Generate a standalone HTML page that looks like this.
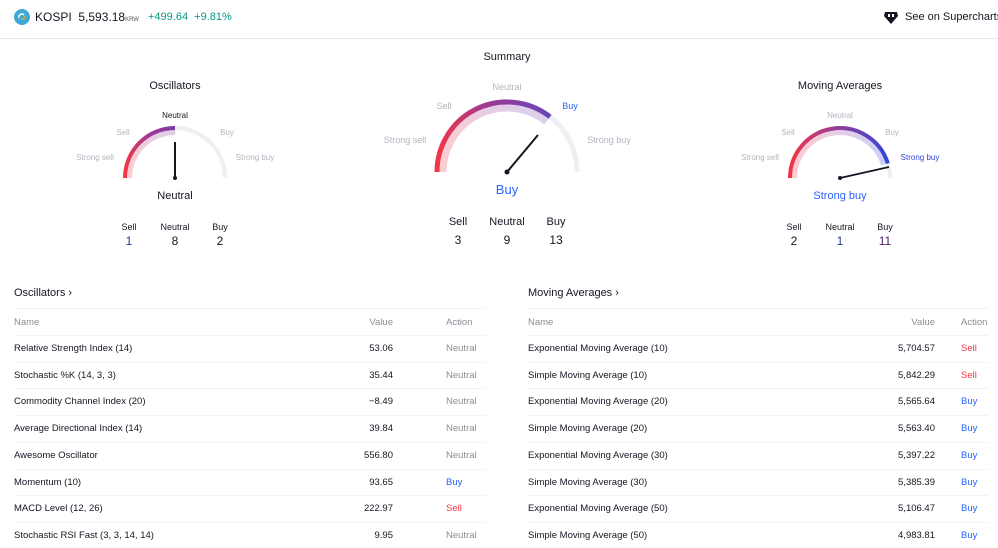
<!DOCTYPE html>
<html><head><meta charset="utf-8"><style>
*{margin:0;padding:0;box-sizing:border-box}
body{width:998px;height:548px;overflow:hidden;background:#fff;font-family:"Liberation Sans",sans-serif;color:#131722;position:relative}
.a{position:absolute;white-space:nowrap}
.c{transform:translateX(-50%);text-align:center}
.g{color:#b2b5be}
.t{font-size:9.5px}
.sep{position:absolute;height:1px;background:#f0f3fa}
.blue{color:#2962ff}.red{color:#f23645}.grey{color:#8a8d96}
</style></head><body>
<div class="a" style="left:0;top:38px;width:998px;height:1px;background:#e6e8ec"></div>
<svg class="a" style="left:14px;top:9px" width="16" height="16" viewBox="0 0 16 16"><circle cx="8" cy="8" r="8" fill="#3fa9d6"/><path d="M5 9a3 3 0 0 1 5-3" stroke="#fff" stroke-width="1.4" fill="none"/><path d="M11 7a3 3 0 0 1-4 3" stroke="#f5a623" stroke-width="1.2" fill="none"/></svg>
<div class="a" style="left:35px;top:10px;font-size:12px">KOSPI&nbsp; 5,593.18<span style="font-size:6px;color:#50535e">KRW</span></div>
<div class="a" style="left:148px;top:11px;font-size:11px;color:#089981">+499.64&nbsp; +9.81%</div>
<svg class="a" style="left:883px;top:9px" width="16" height="16" viewBox="0 0 16 16"><path d="M2 3h12l1 4-7 8-7-8z" fill="#131722"/><rect x="5" y="5" width="2" height="3" fill="#fff"/><rect x="9" y="5" width="2" height="3" fill="#fff"/></svg>
<div class="a" style="left:905px;top:11px;font-size:11px">See on Supercharts</div>

<div class="a c" style="left:507px;top:51px;font-size:11px">Summary</div>
<div class="a c" style="left:175px;top:80px;font-size:11px">Oscillators</div>
<div class="a c" style="left:840px;top:80px;font-size:11px">Moving Averages</div>

<svg class="a" style="left:0;top:0" width="998" height="260">
<defs><linearGradient id="gr" x1="0" x2="1" y1="0" y2="0"><stop offset="0" stop-color="#f23645"/><stop offset=".5" stop-color="#9c3a96"/><stop offset="1" stop-color="#7b3ba0"/></linearGradient>
<linearGradient id="gr2" x1="0" x2="1"><stop offset="0" stop-color="#f23645"/><stop offset=".45" stop-color="#9c3a96"/><stop offset="1" stop-color="#6a45b8"/></linearGradient>
<linearGradient id="gr3" x1="0" x2="1"><stop offset="0" stop-color="#f23645"/><stop offset=".45" stop-color="#9c3a96"/><stop offset="1" stop-color="#3345d8"/></linearGradient></defs>
<path d="M175 128A50 50 0 0 1 225 178" stroke="#eeeff2" stroke-width="4" fill="none"/>
<path d="M129.5 178A45.5 45.5 0 0 1 175 132.5" stroke="url(#gr)" stroke-opacity=".25" stroke-width="5" fill="none"/>
<path d="M125 178A50 50 0 0 1 175 128" stroke="url(#gr)" stroke-width="4" fill="none"/>
<line x1="175" y1="178" x2="175" y2="142" stroke="#131722" stroke-width="2"/><circle cx="175" cy="178" r="2" fill="#131722"/>
<path d="M550.1 116.8A70 70 0 0 1 577 172" stroke="#eeeff2" stroke-width="5" fill="none"/>
<path d="M443 172A64 64 0 0 1 546.4 121.6" stroke="url(#gr2)" stroke-opacity=".25" stroke-width="7" fill="none"/>
<path d="M437 172A70 70 0 0 1 550.1 116.8" stroke="url(#gr2)" stroke-width="5" fill="none"/>
<line x1="507" y1="172" x2="538" y2="135" stroke="#131722" stroke-width="2"/><circle cx="507" cy="172" r="2.5" fill="#131722"/>
<path d="M887.8 163.4A50 50 0 0 1 890 178" stroke="#eeeff2" stroke-width="4" fill="none"/>
<path d="M794.5 178A45.5 45.5 0 0 1 883.5 164.7" stroke="url(#gr3)" stroke-opacity=".25" stroke-width="5" fill="none"/>
<path d="M790 178A50 50 0 0 1 887.8 163.4" stroke="url(#gr3)" stroke-width="4" fill="none"/>
<line x1="840" y1="178" x2="889" y2="167" stroke="#131722" stroke-width="1.8"/><circle cx="840" cy="178" r="2" fill="#131722"/>
</svg>

<div class="a c" style="left:175px;top:111px;font-size:8px">Neutral</div>
<div class="a c g" style="left:123px;top:128px;font-size:8px">Sell</div>
<div class="a c g" style="left:227px;top:128px;font-size:8px">Buy</div>
<div class="a c g" style="left:95px;top:153px;font-size:8px">Strong sell</div>
<div class="a c g" style="left:255px;top:153px;font-size:8px">Strong buy</div>
<div class="a c" style="left:175px;top:190px;font-size:11px">Neutral</div>
<div class="a c" style="left:129px;top:222px;font-size:9px">Sell</div>
<div class="a c" style="left:175px;top:222px;font-size:9px">Neutral</div>
<div class="a c" style="left:220px;top:222px;font-size:9px">Buy</div>
<div class="a c" style="left:129px;top:234px;font-size:12px;color:#1e3a8a">1</div>
<div class="a c" style="left:175px;top:234px;font-size:12px">8</div>
<div class="a c" style="left:220px;top:234px;font-size:12px">2</div>

<div class="a c g" style="left:507px;top:82px;font-size:9px">Neutral</div>
<div class="a c g" style="left:444px;top:101px;font-size:9px">Sell</div>
<div class="a c" style="left:570px;top:101px;font-size:9px;color:#2962ff">Buy</div>
<div class="a c g" style="left:405px;top:135px;font-size:9px">Strong sell</div>
<div class="a c g" style="left:609px;top:135px;font-size:9px">Strong buy</div>
<div class="a c" style="left:507px;top:182px;font-size:13px;color:#2962ff">Buy</div>
<div class="a c" style="left:458px;top:216px;font-size:11px">Sell</div>
<div class="a c" style="left:507px;top:216px;font-size:11px">Neutral</div>
<div class="a c" style="left:556px;top:216px;font-size:11px">Buy</div>
<div class="a c" style="left:458px;top:233px;font-size:12px">3</div>
<div class="a c" style="left:507px;top:233px;font-size:12px">9</div>
<div class="a c" style="left:556px;top:233px;font-size:12px">13</div>

<div class="a c g" style="left:840px;top:111px;font-size:8px">Neutral</div>
<div class="a c g" style="left:788px;top:128px;font-size:8px">Sell</div>
<div class="a c g" style="left:892px;top:128px;font-size:8px">Buy</div>
<div class="a c g" style="left:760px;top:153px;font-size:8px">Strong sell</div>
<div class="a c" style="left:920px;top:153px;font-size:8px;color:#3345d8">Strong buy</div>
<div class="a c" style="left:840px;top:190px;font-size:11px;color:#2962ff">Strong buy</div>
<div class="a c" style="left:794px;top:222px;font-size:9px">Sell</div>
<div class="a c" style="left:840px;top:222px;font-size:9px">Neutral</div>
<div class="a c" style="left:885px;top:222px;font-size:9px">Buy</div>
<div class="a c" style="left:794px;top:234px;font-size:12px">2</div>
<div class="a c" style="left:840px;top:234px;font-size:12px;color:#1e3a8a">1</div>
<div class="a c" style="left:885px;top:234px;font-size:12px;color:#4a1d6e">11</div>

<div class="a" style="left:14px;top:287px;font-size:11px">Oscillators ›</div>
<div class="a" style="left:528px;top:287px;font-size:11px">Moving Averages ›</div>
<div id="T"></div>
<script>
var L=[["Relative Strength Index (14)","53.06","Neutral"],["Stochastic %K (14, 3, 3)","35.44","Neutral"],["Commodity Channel Index (20)","−8.49","Neutral"],["Average Directional Index (14)","39.84","Neutral"],["Awesome Oscillator","556.80","Neutral"],["Momentum (10)","93.65","Buy"],["MACD Level (12, 26)","222.97","Sell"],["Stochastic RSI Fast (3, 3, 14, 14)","9.95","Neutral"]];
var R=[["Exponential Moving Average (10)","5,704.57","Sell"],["Simple Moving Average (10)","5,842.29","Sell"],["Exponential Moving Average (20)","5,565.64","Buy"],["Simple Moving Average (20)","5,563.40","Buy"],["Exponential Moving Average (30)","5,397.22","Buy"],["Simple Moving Average (30)","5,385.39","Buy"],["Exponential Moving Average (50)","5,106.47","Buy"],["Simple Moving Average (50)","4,983.81","Buy"]];
var h="";
function tb(x,w,vr,ax,D){
 h+='<div class="sep" style="left:'+x+'px;top:308px;width:'+w+'px"></div>';
 h+='<div class="a t grey" style="left:'+x+'px;top:317px">Name</div><div class="a t grey" style="right:'+(998-vr)+'px;top:317px">Value</div><div class="a t grey" style="left:'+ax+'px;top:317px">Action</div>';
 for(var i=0;i<8;i++){var y=335+i*26.7;var d=D[i];
  h+='<div class="sep" style="left:'+x+'px;top:'+y+'px;width:'+w+'px"></div>';
  var c=d[2]=="Buy"?"blue":d[2]=="Sell"?"red":"grey";
  h+='<div class="a t" style="left:'+x+'px;top:'+(y+8)+'px">'+d[0]+'</div><div class="a t" style="right:'+(998-vr)+'px;top:'+(y+8)+'px">'+d[1]+'</div><div class="a t '+c+'" style="left:'+ax+'px;top:'+(y+8)+'px">'+d[2]+'</div>';}
}
tb(14,472,393,446,L);tb(528,460,935,961,R);
document.getElementById("T").innerHTML=h;
</script>
</body></html>
